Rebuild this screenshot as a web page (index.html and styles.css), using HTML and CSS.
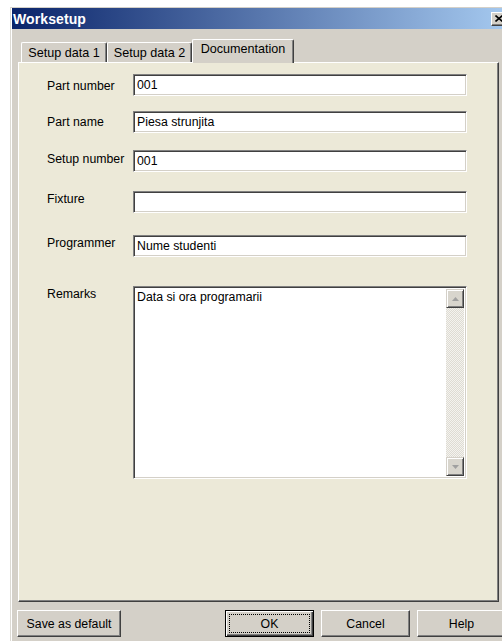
FILE: index.html
```html
<!DOCTYPE html>
<html lang="en">
<head>
<meta charset="utf-8">
<title>Worksetup</title>
<link rel="stylesheet" href="styles.css">
</head>
<body>
<div class="dialog">
  <div class="titlebar">
    <span class="title">Worksetup</span>
    <span class="close">
      <svg width="8" height="7" viewBox="0 0 8 7"><path d="M0.5 0.5 L7.5 6.5 M7.5 0.5 L0.5 6.5" stroke="#000" stroke-width="1.6" fill="none"/></svg>
    </span>
  </div>
  <div class="content">
    <div class="tabs">
      <div class="tab tab-1">Setup data 1</div>
      <div class="tab tab-2">Setup data 2</div>
      <div class="tab tab-3 active">Documentation</div>
    </div>
    <div class="panel">
      <div class="field row-1">
        <span class="label">Part number</span>
        <div class="input">001</div>
      </div>
      <div class="field row-2">
        <span class="label">Part name</span>
        <div class="input">Piesa strunjita</div>
      </div>
      <div class="field row-3">
        <span class="label">Setup number</span>
        <div class="input">001</div>
      </div>
      <div class="field row-4">
        <span class="label">Fixture</span>
        <div class="input"></div>
      </div>
      <div class="field row-5">
        <span class="label">Programmer</span>
        <div class="input">Nume studenti</div>
      </div>
      <div class="field row-6">
        <span class="label">Remarks</span>
        <div class="memo">
          <div class="memo-text">Data si ora programarii</div>
          <div class="vscroll">
            <div class="sbtn">
              <svg width="7" height="4" viewBox="0 0 7 4"><polygon points="0,4 7,4 3.5,0" fill="#a0a0a0"/></svg>
            </div>
            <div class="track"></div>
            <div class="sbtn">
              <svg width="7" height="4" viewBox="0 0 7 4"><polygon points="0,0 7,0 3.5,4" fill="#a0a0a0"/></svg>
            </div>
          </div>
        </div>
      </div>
    </div>
    <div class="buttons">
      <div class="btn btn-save">Save as default</div>
      <div class="btn-group">
        <div class="btn btn-default"><span class="focus">OK</span></div>
        <div class="btn">Cancel</div>
        <div class="btn">Help</div>
      </div>
    </div>
  </div>
</div>
</body>
</html>
```
FILE: styles.css
```css
html, body {
  margin: 0;
  padding: 0;
  background: #fff;
  overflow: hidden;
}

body {
  font-family: "Liberation Sans", Arial, sans-serif;
  font-size: 12.3px;
  color: #000;
}

/* window frame */
.dialog {
  box-sizing: border-box;
  margin: 7px 0 0 10px;
  width: 500px;
  height: 634px;
  background: #d4d0c8;
  border-top: 1px solid #d4d0c8;
  border-left: 1px solid #dcdad4;
  padding-left: 1px;
  box-shadow: inset 1px 0 0 #fff;
}

.titlebar {
  height: 21px;
  display: flex;
  align-items: center;
  justify-content: space-between;
  padding: 0 3px 0 1px;
  background: linear-gradient(to right, #0a246a, #a6caf0);
}

.title {
  color: #fff;
  font-weight: bold;
  font-size: 14px;
  letter-spacing: 0.1px;
}

.close {
  box-sizing: border-box;
  width: 16px;
  height: 14px;
  display: flex;
  align-items: center;
  justify-content: center;
  background: #d4d0c8;
  border-top: 1px solid #fff;
  border-left: 1px solid #fff;
  border-right: 1px solid #404040;
  border-bottom: 1px solid #404040;
  box-shadow: inset -1px -1px 0 #808080;
}

.content {
  padding: 10px 0 0 6px;
}

/* tab strip */
.tabs {
  display: flex;
  align-items: flex-end;
  height: 23px;
  padding-left: 3px;
}

.tab {
  box-sizing: border-box;
  height: 20px;
  padding-top: 3px;
  font-size: 12.6px;
  line-height: 14px;
  text-align: center;
  background: #d4d0c8;
  border-top: 1px solid #fff;
  border-left: 1px solid #fff;
  border-right: 1px solid #404040;
  border-radius: 2px 2px 0 0;
  box-shadow: inset -1px 0 0 #808080;
  white-space: nowrap;
}

.tab-1 { width: 86px; }
.tab-2 { width: 85px; }
.tab-3 { width: 102px; }

.tab.active {
  height: 24px;
  padding-top: 2px;
  margin-bottom: -1px;
  position: relative;
  z-index: 1;
}

/* tab page */
.panel {
  box-sizing: border-box;
  width: 481px;
  height: 540px;
  padding: 11px 0 0 28px;
  background: #ece9d8;
  border-top: 1px solid #fff;
  border-left: 1px solid #fff;
  border-right: 1px solid #404040;
  border-bottom: 1px solid #404040;
  box-shadow: inset -1px -1px 0 #808080;
}

.field {
  display: flex;
  align-items: flex-start;
}

.label {
  width: 86px;
  flex: none;
  line-height: 14px;
  white-space: nowrap;
}

.row-1 .label { padding-top: 5px; }
.row-2 { margin-top: 15px; }
.row-2 .label { padding-top: 4px; }
.row-3 { margin-top: 17px; }
.row-3 .label { padding-top: 2px; }
.row-4 { margin-top: 19px; }
.row-4 .label { padding-top: 1px; }
.row-5 { margin-top: 22px; }
.row-5 .label { padding-top: 1px; }
.row-6 { margin-top: 29px; }
.row-6 .label { padding-top: 1px; }

/* sunken edit boxes */
.input,
.memo {
  box-sizing: border-box;
  width: 334px;
  background: #fff;
  border-top: 1px solid #808080;
  border-left: 1px solid #808080;
  border-right: 1px solid #fff;
  border-bottom: 1px solid #fff;
  box-shadow: inset 1px 1px 0 #404040, inset -1px -1px 0 #d4d0c8;
}

.input {
  height: 22px;
  padding: 1px 3px 0 3px;
  line-height: 18px;
  white-space: nowrap;
}

.memo {
  height: 193px;
  display: flex;
  padding: 2px 2px 2px 2px;
}

.memo-text {
  flex: 1;
  padding: 1px 1px 0 1px;
  line-height: 14px;
}

.vscroll {
  width: 18px;
  display: flex;
  flex-direction: column;
}

.sbtn {
  box-sizing: border-box;
  height: 19px;
  display: flex;
  align-items: center;
  justify-content: center;
  background: #d8d5cd;
  border-top: 1px solid #d4d0c8;
  border-left: 1px solid #d4d0c8;
  border-right: 1px solid #404040;
  border-bottom: 1px solid #404040;
  box-shadow: inset 1px 1px 0 #fff, inset -1px -1px 0 #808080;
}

.track {
  flex: 1;
  background: repeating-conic-gradient(#dedbd3 0 25%, #f4f3ef 0 50%) 0 0 / 2px 2px;
}

/* command buttons */
.buttons {
  display: flex;
  margin-top: 8px;
  margin-left: -1px;
}

.btn-group {
  display: flex;
  gap: 7px;
  margin-left: 104px;
}

.btn {
  box-sizing: border-box;
  width: 89px;
  height: 27px;
  display: flex;
  align-items: center;
  justify-content: center;
  background: #d4d0c8;
  border-top: 1px solid #fff;
  border-left: 1px solid #fff;
  border-right: 1px solid #404040;
  border-bottom: 1px solid #404040;
  box-shadow: inset -1px -1px 0 #808080;
  white-space: nowrap;
}

.btn-save {
  width: 104px;
}

.btn-default {
  border: 1px solid #000;
  box-shadow: inset 1px 1px 0 #fff, inset -1px -1px 0 #404040, inset -2px -2px 0 #808080;
  padding: 3px;
  align-items: stretch;
}

.focus {
  flex: 1;
  display: flex;
  align-items: center;
  justify-content: center;
  border: 1px dotted #000;
}
```
